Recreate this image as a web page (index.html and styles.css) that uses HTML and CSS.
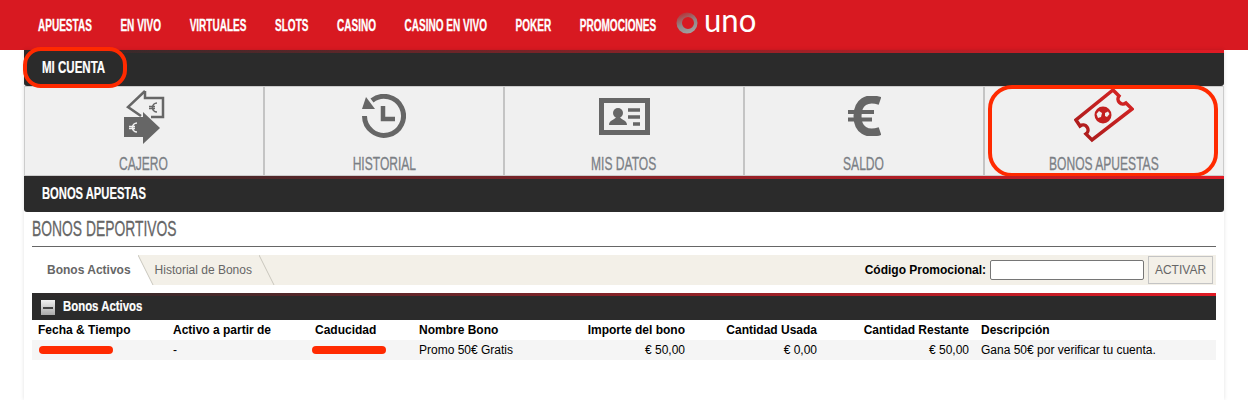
FILE: index.html
```html
<!DOCTYPE html>
<html lang="es">
<head>
  <meta charset="UTF-8" />
  <title>Mi Cuenta</title>
  <link rel="stylesheet" href="styles.css">
</head>
<body>

  <header class="top-bar">
    <nav class="main-nav">
      <a href="#">APUESTAS</a>
      <a href="#">EN VIVO</a>
      <a href="#">VIRTUALES</a>
      <a href="#">SLOTS</a>
      <a href="#">CASINO</a>
      <a href="#">CASINO EN VIVO</a>
      <a href="#">POKER</a>
      <a href="#">PROMOCIONES</a>
    </nav>
    <div class="logo">
      <svg width="22" height="22" viewBox="0 0 22 22">
        <defs>
          <linearGradient id="ringGrad" x1="0.3" y1="0" x2="0.7" y2="1">
            <stop offset="0" stop-color="#b83034" />
            <stop offset="0.5" stop-color="#8f8585" />
            <stop offset="1" stop-color="#a3a3a3" />
          </linearGradient>
        </defs>
        <path d="M11 0.5 A10.5 10.5 0 1 0 11 21.5 A10.5 10.5 0 1 0 11 0.5 Z M12 5 A6 6 0 1 1 12 17 A6 6 0 1 1 12 5 Z" fill="url(#ringGrad)" fill-rule="evenodd" />
      </svg>
      <span class="logo-text">uno</span>
    </div>
  </header>

  <main class="page">
    <div class="dark-bar account-bar">
      <span class="cond cond-title">MI CUENTA</span>
      <span class="mark mark-title"></span>
    </div>

    <div class="account-tabs">
      <a class="account-tab" href="#">
        <span class="tab-icon">
          <svg width="41" height="57" viewBox="0 0 41 57">
            <path d="M21 3 L4 19 L17 28 M21 3 V10 H39 V29 H27" fill="none" stroke="#666" stroke-width="2.5" />
            <path d="M0 29 H19 V24 L36 40 L19 56 V49 H0 Z" fill="#666" />
            <path d="M33 15 A4.5 4.5 0 1 0 33 24 M25 18.5 H31 M25 20.5 H31" fill="none" stroke="#666" stroke-width="1.6" />
            <path d="M13 35 A4.5 4.5 0 1 0 13 44 M5 38.5 H11 M5 40.5 H11" fill="none" stroke="#f0f0f0" stroke-width="1.6" />
          </svg>
        </span>
        <span class="tab-label">CAJERO</span>
      </a>
      <a class="account-tab" href="#">
        <span class="tab-icon">
          <svg width="44" height="44" viewBox="0 0 44 44">
            <path d="M10 6.5 A19.5 19.5 0 1 1 2.5 22" fill="none" stroke="#666" stroke-width="5" />
            <path d="M0 15 H13 L4 3 Z" fill="#666" />
            <path d="M21 12 V25 H33" fill="none" stroke="#666" stroke-width="4.5" />
          </svg>
        </span>
        <span class="tab-label">HISTORIAL</span>
      </a>
      <a class="account-tab" href="#">
        <span class="tab-icon">
          <svg width="51" height="37" viewBox="0 0 51 37">
            <rect x="2.5" y="2.5" width="46" height="32" fill="none" stroke="#666" stroke-width="5" />
            <circle cx="19" cy="15" r="5" fill="#666" />
            <path d="M10 27 C10 22 16 22 17 19 H21 C22 22 28 22 28 27 Z" fill="#666" />
            <path d="M29 12 H41 M29 19 H41 M34 26 H41" stroke="#666" stroke-width="3.5" />
          </svg>
        </span>
        <span class="tab-label">MIS DATOS</span>
      </a>
      <a class="account-tab" href="#">
        <span class="tab-icon">
          <svg width="33" height="40" viewBox="0 0 33 40">
            <path d="M32 5 C19 0.5 9.5 6 9.5 20 C9.5 34 19 39.5 32 35" fill="none" stroke="#666" stroke-width="8" />
            <path d="M0 16 H26 M0 23.5 H24" stroke="#666" stroke-width="4" />
          </svg>
        </span>
        <span class="tab-label">SALDO</span>
      </a>
      <a class="account-tab" href="#">
        <span class="tab-icon">
          <svg width="60" height="56" viewBox="0 0 60 56">
            <defs>
              <linearGradient id="ticketGrad" x1="1" y1="0" x2="0" y2="1">
                <stop offset="0" stop-color="#d92424" />
                <stop offset="1" stop-color="#a81c1c" />
              </linearGradient>
            </defs>
            <path d="M39 2 L45 8 A5 5 0 0 0 52 15 L58 21 L18 52 L12 46 A5 5 0 0 0 6 38 L2 32 Z" fill="none" stroke="url(#ticketGrad)" stroke-width="3.5" />
            <circle cx="29" cy="27" r="8.5" fill="#c32020" />
            <path d="M25 23 L28 25 L27 29 L24 30 L22.5 26 Z" fill="#f0f0f0" />
            <path d="M31 25 L34 23.5 L35.5 26 L33 29 L31 28 Z" fill="#f0f0f0" />
          </svg>
        </span>
        <span class="tab-label">BONOS APUESTAS</span>
        <span class="mark mark-tab"></span>
      </a>
    </div>

    <div class="dark-bar section-bar">
      <span class="cond">BONOS APUESTAS</span>
    </div>

    <div class="content">
      <h2 class="content-title"><span>BONOS DEPORTIVOS</span></h2>

      <div class="bonus-tabs">
        <a class="bonus-tab active" href="#">Bonos Activos</a>
        <svg class="slant" width="16" height="30" viewBox="0 0 16 30">
          <polygon points="0,0 15,30 0,30" fill="#fff" />
          <line x1="0" y1="0" x2="15" y2="30" stroke="#c9c6bd" />
        </svg>
        <a class="bonus-tab" href="#">Historial de Bonos</a>
        <svg class="slant" width="16" height="30" viewBox="0 0 16 30">
          <line x1="0" y1="0" x2="15" y2="30" stroke="#c9c6bd" />
        </svg>
        <form class="promo-form">
          <label for="promoCode">Código Promocional:</label>
          <input type="text" id="promoCode" />
          <button type="button">ACTIVAR</button>
        </form>
      </div>

      <div class="table-bar">
        <span class="collapse-icon"></span>
        <span class="table-bar-title">Bonos Activos</span>
      </div>

      <table class="bonus-table">
        <colgroup>
          <col class="col-date" />
          <col class="col-from" />
          <col class="col-end" />
          <col class="col-name" />
          <col class="col-amount" />
          <col class="col-used" />
          <col class="col-left" />
          <col class="col-desc" />
        </colgroup>
        <thead>
          <tr>
            <th>Fecha &amp; Tiempo</th>
            <th>Activo a partir de</th>
            <th>Caducidad</th>
            <th>Nombre Bono</th>
            <th class="num">Importe del bono</th>
            <th class="num">Cantidad Usada</th>
            <th class="num">Cantidad Restante</th>
            <th>Descripción</th>
          </tr>
        </thead>
        <tbody>
          <tr>
            <td><span class="scribble"></span></td>
            <td>-</td>
            <td><span class="scribble scribble-end"></span></td>
            <td>Promo 50€ Gratis</td>
            <td class="num">€ 50,00</td>
            <td class="num">€ 0,00</td>
            <td class="num">€ 50,00</td>
            <td>Gana 50€ por verificar tu cuenta.</td>
          </tr>
        </tbody>
      </table>
    </div>
  </main>

</body>
</html>
```

FILE: styles.css
```css
* {
  margin: 0;
  padding: 0;
  box-sizing: border-box;
}

html,
body {
  height: 100%;
  overflow: hidden;
}

body {
  font-family: "Liberation Sans", Arial, sans-serif;
  font-size: 12px;
  background-color: #fff;
  color: #000;
}

a {
  text-decoration: none;
  color: inherit;
}

/* Red header */
.top-bar {
  display: flex;
  align-items: center;
  height: 50px;
  padding-left: 38px;
  background: #d81921;
}

/* no condensed font installed, so the headings are squeezed with scaleX */
.main-nav {
  flex: none;
  display: flex;
  gap: 45.5px;
  width: 990px;
  margin-top: 2px;
  margin-right: -369px;
  transform: scaleX(0.627);
  transform-origin: left;
  font-size: 16px;
  font-weight: 700;
  -webkit-text-stroke: 0.3px #fff;
  white-space: nowrap;
  color: #fff;
}

.logo {
  display: flex;
  align-items: center;
  gap: 6px;
  margin-left: 17px;
  margin-top: -5px;
}

.logo-text {
  display: inline-block;
  transform: scaleX(0.97);
  transform-origin: left;
  font-family: Lato, sans-serif;
  font-size: 32px;
  line-height: 22px;
  font-weight: 400;
  color: #fff;
  margin-top: -5px;
}

/* Page column */
.page {
  width: 1200px;
  min-height: 350px;
  margin-left: 24px;
  background: #fff;
  box-shadow: 0 0 4px rgba(0, 0, 0, 0.12);
}

.dark-bar {
  position: relative;
  display: flex;
  align-items: center;
  height: 36px;
  padding-left: 18px;
  border-radius: 0 0 3px 3px;
  background:
    linear-gradient(to right, #2b2b2b, #e01a24) top / 100% 3px no-repeat,
    #2b2b2b;
  font-size: 16px;
  font-weight: 700;
  color: #fff;
}

.cond {
  display: inline-block;
  transform: scaleX(0.7);
  transform-origin: left;
  -webkit-text-stroke: 0.2px #fff;
  white-space: nowrap;
}

.cond-title {
  transform: scaleX(0.72);
}

/* Red marker rings drawn over the screenshot */
.mark {
  position: absolute;
  border: 4px solid #ff2a00;
  pointer-events: none;
}

.mark-title {
  left: -1px;
  top: -3px;
  width: 104px;
  height: 41px;
  border-radius: 18px;
}

.mark-tab {
  left: 3px;
  top: -2px;
  width: 230px;
  height: 92px;
  border-radius: 24px;
}

/* Account icons row */
.account-tabs {
  display: flex;
  height: 90px;
  border: 1px solid #ccc;
  border-right: 0;
  background: #f0f0f0;
}

.account-tab {
  position: relative;
  flex: none;
  width: 240px;
  display: flex;
  flex-direction: column;
  align-items: center;
  border-right: 2px solid #c4c4c4;
}

.account-tab:last-child {
  width: 239px;
  border-right: 1px solid #ccc;
}

.tab-icon {
  display: flex;
  align-items: center;
  justify-content: center;
  height: 58px;
}

.tab-label {
  margin-top: 9px;
  transform: scaleX(0.67);
  font-size: 18px;
  line-height: 20px;
  -webkit-text-stroke: 0.3px #7b7f85;
  white-space: nowrap;
  color: #7b7f85;
}

/* Bonus content */
.content {
  padding: 0 8px;
}

.content-title {
  height: 35px;
  padding-top: 5px;
  border-bottom: 1px solid #666;
  font-size: 22px;
  line-height: 24px;
  font-weight: 400;
  -webkit-text-stroke: 0.3px #666;
  color: #666;
}

.content-title span {
  display: inline-block;
  transform: scaleX(0.63);
  transform-origin: left;
  white-space: nowrap;
}

.bonus-tabs {
  display: flex;
  align-items: center;
  height: 30px;
  margin-top: 8px;
  background: #f3f0e8;
  color: #666;
}

.bonus-tab {
  padding: 0 3px 0 15px;
  line-height: 30px;
}

.bonus-tab.active {
  padding-right: 7px;
  background: #fff;
  font-weight: 700;
}

.bonus-tab + .slant + .bonus-tab {
  padding-left: 1px;
  padding-right: 7px;
}

.promo-form {
  display: flex;
  align-items: center;
  margin-left: auto;
  margin-right: 3px;
  color: #000;
}

.promo-form label {
  font-weight: 700;
}

.promo-form input {
  width: 154px;
  height: 20px;
  margin-left: 4px;
  border: 1px solid #767676;
  border-radius: 2px;
  background: #fff;
}

.promo-form button {
  width: 65px;
  height: 28px;
  margin-left: 4px;
  border: 1px solid #c4c4c4;
  background: #f3f0e8;
  font-family: inherit;
  font-size: 12px;
  color: #666;
}

.table-bar {
  display: flex;
  align-items: center;
  gap: 8px;
  height: 27px;
  margin-top: 8px;
  padding-left: 9px;
  background:
    linear-gradient(to right, #2b2b2b, #e01a24) top / 100% 3px no-repeat,
    #2b2b2b;
  font-size: 15px;
  font-weight: 700;
  color: #fff;
}

.table-bar-title {
  display: inline-block;
  margin-top: -3px;
  transform: scaleX(0.76);
  transform-origin: left;
  -webkit-text-stroke: 0.2px #fff;
  white-space: nowrap;
}

.collapse-icon {
  position: relative;
  width: 14px;
  height: 15px;
  margin-top: 1px;
  background: linear-gradient(#f2f2f2, #a8a8a8);
}

.collapse-icon::after {
  content: "";
  position: absolute;
  left: 2px;
  right: 2px;
  top: 7px;
  height: 2px;
  background: #444;
}

.bonus-table {
  width: 100%;
  border-collapse: collapse;
  table-layout: fixed;
}

.col-date { width: 135px; }
.col-from { width: 142px; }
.col-end { width: 104px; }
.col-name { width: 147px; }
.col-amount { width: 131px; }
.col-used { width: 132px; }
.col-left { width: 152px; }

.bonus-table th,
.bonus-table td {
  height: 20px;
  padding: 0 6px;
  text-align: left;
  white-space: nowrap;
}

.bonus-table tbody tr {
  background: #f5f5f5;
}

.bonus-table .num {
  text-align: right;
}

.scribble {
  display: block;
  width: 74px;
  height: 8px;
  margin-left: 1px;
  border-radius: 4px;
  background: #ff2a00;
}

.scribble-end {
  margin-left: -3px;
}
```
